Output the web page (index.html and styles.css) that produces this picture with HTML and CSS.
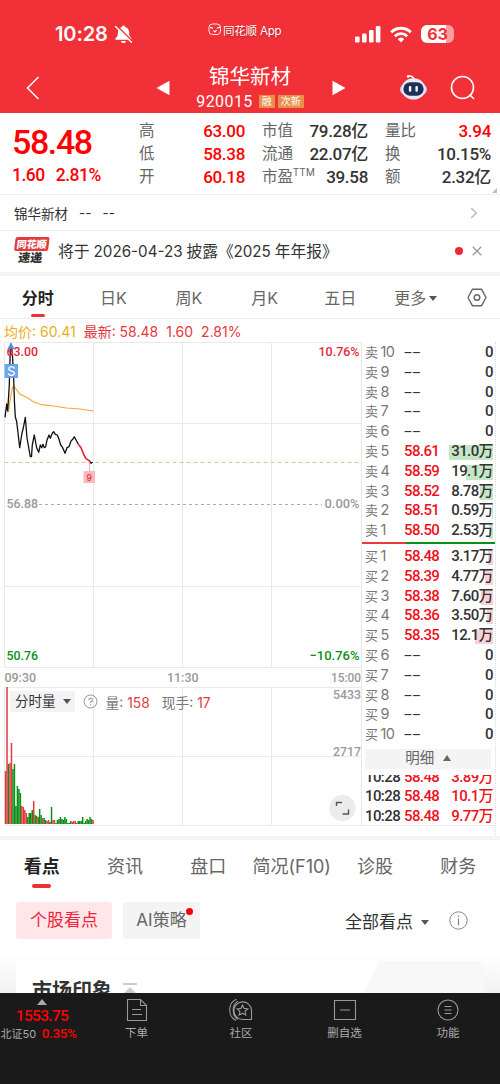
FILE: index.html
```html
<!DOCTYPE html>
<html lang="zh-CN">
<head>
    <meta charset="UTF-8">
    <meta name="viewport" content="width=device-width, initial-scale=1.0">
    <title>锦华新材 920015</title>
    <link rel="stylesheet" href="styles.css">
</head>
<body>
    <header class="top">
        <div class="status">
            <div class="clock">
                <span>10:28</span>
                <svg width="19" height="19" viewBox="0 0 19 19">
                    <path d="M9.500.6c-.9 0-1.500.7-1.500 1.500C5.200 2.900 3.900 5 3.900 7.500c0 3.300-.8 4.300-2.300 5.700-.6.6-.3 1.600.6 1.600h14.600c.9 0 1.200-1 .6-1.600-1.500-1.400-2.300-2.400-2.300-5.700 0-2.500-1.300-4.600-4.100-5.400 0-.8-.6-1.500-1.500-1.500zM7 15.900h5c-.2 1.300-1.200 2.200-2.500 2.200s-2.300-.9-2.500-2.200z" fill="#fff"/>
                    <path d="M2.800.8l15.800 15.500" stroke="#f23038" stroke-width="1.500"/>
                    <path d="M1.500 1.500l16 15.800" stroke="#fff" stroke-width="1.400" stroke-linecap="round"/>
                </svg>
            </div>
            <div class="brand">
                <svg width="14" height="13" viewBox="0 0 14 13" fill="none" stroke="#fff">
                    <rect x="1" y="1" width="11.500" height="10.500" rx="3.500" stroke-width=".9"/>
                    <path d="M2 4.500l3 .6M8.800 5.200l3.600-1.200M5.500 7.500l1.500 1.500 1.600-2" stroke-width="1.100"/>
                </svg>
                <span>同花顺 App</span>
            </div>
            <div class="signals">
                <svg width="26" height="17" viewBox="0 0 26 17" fill="#fff">
                    <rect x="0" y="10.500" width="4.600" height="6" rx="1.300"/>
                    <rect x="7" y="7.500" width="4.600" height="9" rx="1.300"/>
                    <rect x="14" y="4" width="4.600" height="12.500" rx="1.300"/>
                    <rect x="20.800" y="0" width="4.600" height="16.500" rx="1.300"/>
                </svg>
                <svg width="22" height="17" viewBox="0 0 22 17" fill="none" stroke="#fff" stroke-width="2.900">
                    <path d="M1.200 6.200a14 14 0 0 1 19.600 0"/>
                    <path d="M4.800 10.200a8.800 8.800 0 0 1 12.400 0"/>
                    <path d="M11 16.600l-3.300-3.500a4.800 4.800 0 0 1 6.600 0z" fill="#fff" stroke="none"/>
                </svg>
                <div class="battery">63</div>
            </div>
        </div>
        <div class="nav">
            <svg class="back" width="14" height="24" viewBox="0 0 14 24" fill="none" stroke="#fff" stroke-width="1.500"><path d="M12.500 1L1.500 12l11 11"/></svg>
            <svg class="prev" width="14" height="16" viewBox="0 0 14 16"><path d="M13.500.8v14.400L.5 8z" fill="#fff"/></svg>
            <div class="title">
                <div class="name">锦华新材</div>
                <div class="code"><span>920015</span><b>融</b><b>次新</b></div>
            </div>
            <svg class="next" width="14" height="16" viewBox="0 0 14 16"><path d="M.5.8v14.400L13.500 8z" fill="#fff"/></svg>
            <svg class="robot" width="29" height="27" viewBox="0 0 30 28">
                <path d="M10 2.200q4-1 5.500 3" fill="none" stroke="#fff" stroke-width="1.500"/>
                <circle cx="9.500" cy="2.500" r="1.400" fill="#fff"/>
                <ellipse cx="15" cy="16" rx="14" ry="8" fill="#c9c8ee"/>
                <ellipse cx="15" cy="15.500" rx="12.500" ry="11" fill="#e7e9fb"/>
                <rect x="4.500" y="8.500" width="21" height="14" rx="7" fill="#1d3158"/>
                <rect x="10.200" y="12.500" width="2.500" height="5.800" rx="1" fill="#fff"/>
                <rect x="17" y="12.500" width="2.500" height="5.800" rx="1" fill="#fff"/>
            </svg>
            <svg width="26" height="26" viewBox="0 0 26 26" fill="none" stroke="#fff" stroke-width="1.600"><circle cx="12.500" cy="12.500" r="11"/><path d="M20 20l3.500 3.500" stroke-linecap="round"/></svg>
        </div>
    </header>

    <section class="quote">
        <div class="last">
            <div class="price">58.48</div>
            <div class="change"><span>1.60</span><span>2.81%</span></div>
        </div>
        <dl class="red"><dt>高</dt><dd>63.00</dd><dt>低</dt><dd>58.38</dd><dt>开</dt><dd>60.18</dd></dl>
        <dl><dt>市值</dt><dd>79.28亿</dd><dt>流通</dt><dd>22.07亿</dd><dt>市盈<sup>TTM</sup></dt><dd>39.58</dd></dl>
        <dl><dt>量比</dt><dd class="up">3.94</dd><dt>换</dt><dd>10.15%</dd><dt>额</dt><dd>2.32亿</dd></dl>
        <i class="corner"></i>
    </section>

    <div class="sub">
        <span>锦华新材</span><span>--</span><span>--</span>
        <svg width="8" height="12" viewBox="0 0 8 12" fill="none" stroke="#bbb" stroke-width="1.500"><path d="M1.200 1l5 5-5 5"/></svg>
    </div>

    <div class="news">
        <div class="news-logo"><em>同花顺</em><strong>速递</strong></div>
        <p>将于 <span>2026-04-23</span> 披露《<span>2025</span> 年年报》</p>
        <i class="dot"></i>
        <svg width="10" height="10" viewBox="0 0 10 10" stroke="#999" stroke-width="1.300"><path d="M.7.7l8.600 8.600M9.300.7L.7 9.300"/></svg>
    </div>

    <nav class="periods">
        <span class="on">分时</span><span>日K</span><span>周K</span><span>月K</span><span>五日</span><span>更多<i class="caret"></i></span>
        <svg width="20" height="19" viewBox="0 0 20 19" fill="none" stroke="#666" stroke-width="1.400"><path d="M5.500 1.200h9L19 9.500l-4.500 8.300h-9L1 9.500z" stroke-linejoin="round"/><circle cx="10" cy="9.500" r="2.800"/></svg>
    </nav>

    <div class="legend"><span class="avg">均价: 60.41</span><span>最新: 58.48</span><span>1.60</span><span>2.81%</span></div>

    <main class="market">
        <div class="charts">
            <svg class="chart" width="362" height="484" viewBox="0 342 362 484">
                <g class="grid">
                    <path d="M4.500 342.500H362M4.500 423.500H362M4.500 586.500H362M4.500 667.500H362M4.500 687.500H362M4.500 756.500H362M4.500 825.500H362"/>
                    <path d="M4.500 342.500V667M93.500 342.500V667M182.500 342.500V667M271.500 342.500V667M361.500 342.500V825"/>
                    <path d="M4.500 687.500V825M93.500 687.500V825M182.500 687.500V825M271.500 687.500V825"/>
                </g>
                <path d="M4.500 462.500H362" stroke="#dcc2a0" stroke-dasharray="4 3"/>
                <path d="M39 504.500H322" stroke="#aaa" stroke-dasharray="3 3"/>
                <g id="volume"></g>
                <path d="M8.500 412L9.300 405 11 395 12.300 388 13.700 386 16 389 20 394.300 26.700 397.300 33.300 401.700 41.700 404.700 53.300 406 66.700 408 80 409 93.300 411" fill="none" stroke="#f5a733" stroke-width="1.200"/>
                <path d="M5 417.300L6.700 404 7.700 411 9.300 385 10.300 350 11 344 12.300 352 13.700 380 14.500 403 15.300 416.700 16.700 421.700 19.700 447.700 22 433 23.300 428 25.300 417.300 27 438 30.300 456.700H31.500L32.300 445 34.300 435 36.700 448 38.700 452.300 40.300 445 41.700 447.700 43 444.300 44.300 447.700 45.700 446.700 47 440 49 435 50.300 438.300 52.300 433.300 53.700 431.700 55.300 434.300 57.300 435 58.700 438.300 60.700 445 62.700 447.700 65 453.300 67 447.700 69 446.700 71 441 73 439 74.300 436.700 77 441.700 78.300 444.300" class="line"/>
                <path d="M78.300 444.300L81 447.700 83.300 453.300 85.700 458.300 88.700 460.300 90.300 461.700" class="line hot"/>
                <path d="M90.300 461.700L91 463.300 92.700 462.300" class="line"/>
                <path d="M89.500 463V471" stroke="#f7aeb4"/>
                <rect x="83.500" y="471" width="11.500" height="12" fill="#f9b9be"/>
                <text x="89.300" y="480.500" class="nine">9</text>
                <g class="num">
                    <text x="6.500" y="356" class="r" textLength="31.500" lengthAdjust="spacingAndGlyphs">63.00</text>
                    <text x="318.500" y="356" class="r" textLength="41" lengthAdjust="spacingAndGlyphs">10.76%</text>
                    <text x="6.500" y="508" textLength="31.500" lengthAdjust="spacingAndGlyphs">56.88</text>
                    <text x="324.500" y="508" textLength="35" lengthAdjust="spacingAndGlyphs">0.00%</text>
                    <text x="6.500" y="659.500" class="g" textLength="31.500" lengthAdjust="spacingAndGlyphs">50.76</text>
                    <text x="309.500" y="659.500" class="g" textLength="50" lengthAdjust="spacingAndGlyphs">−10.76%</text>
                    <text x="4.500" y="681.500" textLength="31.500" lengthAdjust="spacingAndGlyphs">09:30</text>
                    <text x="167" y="681.500" textLength="31.500" lengthAdjust="spacingAndGlyphs">11:30</text>
                    <text x="331" y="681.500" textLength="30" lengthAdjust="spacingAndGlyphs">15:00</text>
                    <text x="333" y="698.500" textLength="28" lengthAdjust="spacingAndGlyphs">5433</text>
                    <text x="333" y="755.500" textLength="28" lengthAdjust="spacingAndGlyphs">2717</text>
                </g>
                <path d="M7.500 349l3.500-6.500 3.500 6.500z" fill="#4a90e2"/>
                <rect x="4.500" y="364" width="13.500" height="14" fill="#5b9cec" opacity=".9"/>
                <text x="11.300" y="375.500" class="sell">S</text>
                <circle cx="342.500" cy="808" r="13.200" fill="#ececec"/>
                <path d="M336.500 806V802.500H342M348.500 809.500V814H342.500" fill="none" stroke="#555" stroke-width="1.400"/>
            </svg>
            <div class="vol-head">
                <span class="picker">分时量<i class="caret"></i></span>
                <svg width="15" height="15" viewBox="0 0 15 15" fill="none" stroke="#999"><circle cx="7.500" cy="7.500" r="6.500"/><path d="M5.600 6a1.900 1.900 0 1 1 2.700 1.800c-.6.300-.8.600-.8 1.200M7.500 10.200v1.200" stroke-width="1.100"/></svg>
                <span>量: <b>158</b></span><span>现手: <b>17</b></span>
            </div>
        </div>
        <aside class="book">
            <div id="asks"></div>
            <div class="ratio"></div>
            <div id="bids"></div>
            <div class="detail">明细 <i></i></div>
            <div class="ticks">
                <div><span>10:28</span><b>58.48</b><b class="v">3.89万</b></div>
                <div><span>10:28</span><b>58.48</b><b class="v">10.1万</b></div>
                <div><span>10:28</span><b>58.48</b><b class="v">9.77万</b></div>
            </div>
        </aside>
    </main>

    <nav class="tabs">
        <span class="on">看点</span><span>资讯</span><span>盘口</span><span>简况(F10)</span><span>诊股</span><span>财务</span>
    </nav>

    <div class="filters">
        <span class="chip active">个股看点</span>
        <span class="chip">AI策略<i class="dot"></i></span>
        <span class="all">全部看点<i class="caret"></i></span>
        <svg width="19" height="19" viewBox="0 0 19 19" fill="none" stroke="#888"><circle cx="9.500" cy="9.500" r="8.700"/><path d="M9.500 4.500v1.500M9.500 7.500v7" stroke-width="1.200"/></svg>
    </div>

    <section class="feed">
        <div class="card">
            <h2>市场印象</h2>
            <svg width="16" height="16" viewBox="0 0 16 16" fill="#ccc"><path d="M1 1h14v2H1zM8 5l6 6H2z"/></svg>
        </div>
    </section>

    <footer class="dock">
        <div class="index">
            <i class="tri"></i>
            <b>1553.75</b>
            <p>北证<span>50</span> <b>0.35%</b></p>
        </div>
        <div class="item">
            <svg width="24" height="24" viewBox="0 0 24 24"><path d="M2.500 1.500h13l6 6v15h-19zM15.500 1.500v6h6M7 11.500h9M7 16.500h10"/></svg>
            <span>下单</span>
        </div>
        <div class="item">
            <svg width="24" height="24" viewBox="0 0 24 24"><path d="M7.500 1.300C-1.500 5-1.500 18.500 7 22.500M9 3.200C2.500 7 2.500 17.500 9 21.500M14 21.500h8.500V12a8.800 8.800 0 1 0-8.500 9.500z"/><path d="M13.500 7l1.600 3.400 3.700.4-2.700 2.500.7 3.700-3.300-1.800-3.300 1.800.7-3.700-2.700-2.500 3.700-.4z"/></svg>
            <span>社区</span>
        </div>
        <div class="item">
            <svg width="24" height="24" viewBox="0 0 24 24"><path d="M1.500 2.500h21v19h-21zM7 12h10"/></svg>
            <span>删自选</span>
        </div>
        <div class="item">
            <svg width="24" height="24" viewBox="0 0 24 24"><circle cx="12" cy="12" r="10"/><path d="M8.500 8.500h7M8.500 12h7M8.500 15.500h7"/></svg>
            <span>功能</span>
        </div>
    </footer>

    <script>
        // 五档以外没有挂单: [名称, 档位, 价格, 数量, 底色宽度]
        const asks = [
            ['卖', 10], ['卖', 9], ['卖', 8], ['卖', 7], ['卖', 6],
            ['卖', 5, '58.61', '31.0万', 44],
            ['卖', 4, '58.59', '19.1万', 27],
            ['卖', 3, '58.52', '8.78万', 13],
            ['卖', 2, '58.51', '0.59万', 1],
            ['卖', 1, '58.50', '2.53万', 4]
        ];
        const bids = [
            ['买', 1, '58.48', '3.17万', 5],
            ['买', 2, '58.39', '4.77万', 8],
            ['买', 3, '58.38', '7.60万', 12],
            ['买', 4, '58.36', '3.50万', 6],
            ['买', 5, '58.35', '12.1万', 18],
            ['买', 6], ['买', 7], ['买', 8], ['买', 9], ['买', 10]
        ];

        function renderBook(id, rows) {
            document.getElementById(id).innerHTML = rows.map(([side, n, price, vol, w]) => `
                <div class="level">
                    <span class="side">${side}<em>${n}</em></span>
                    <span class="${price ? 'p' : 'none'}">${price || '--'}</span>
                    <span class="v">${w ? `<i style="width:${w}px"></i>` : ''}<u>${vol || '0'}</u></span>
                </div>`).join('');
        }
        renderBook('asks', asks);
        renderBook('bids', bids);

        // 每分钟成交量, r 涨 g 跌
        const volume = '53r 137r 60g 61r 81r 55g 60g 18g 38g 35g 31g 18r 17r 14r 11r 7g 11g 11g 14g 23r 9g 8r 7g 15g 9g 6r 6g 4g 3r 4r 2g 17g 4r 4r 1g 4g 5g 7g 5g 4g 7g 5g 1g 1g 3g 2r 3r 3r 1g 3g 3g 3g 7g 1g 3g 5g 4g 7g 5g 4r';
        document.getElementById('volume').innerHTML = volume.split(' ').map((v, i) => {
            const h = parseInt(v);
            const color = v.endsWith('r') ? '#e8383d' : '#0b8f17';
            return `<rect x="${(4.8 + i * 1.483).toFixed(2)}" y="${824 - h}" width="1.5" height="${h}" fill="${color}"/>`;
        }).join('');
    </script>
</body>
</html>
```
FILE: styles.css
```css
* {
    box-sizing: border-box;
}

body {
    margin: 0;
    width: 500px;
    height: 1084px;
    overflow: hidden;
    background: #fff;
    color: #333;
    font-family: Inter, "Noto Sans CJK SC", sans-serif;
    font-size: 15px;
}

svg {
    display: block;
    flex: none;
}

i, em {
    font-style: normal;
}

/* 顶部 */
.top {
    height: 113px;
    background: #f23038;
    color: #fff;
}

.status {
    height: 62px;
    display: grid;
    grid-template-columns: 208px 1fr 145px;
    padding-top: 19px;
}

.clock {
    display: flex;
    align-items: center;
    gap: 6px;
    height: 30px;
    padding-left: 55px;
    font-size: 20px;
    font-weight: 600;
    letter-spacing: -.1px;
}

.brand {
    display: flex;
    align-items: center;
    gap: 1px;
    height: 21px;
    font-size: 11.5px;
    letter-spacing: -.2px;
    text-shadow: 0 1px 2px rgba(0, 0, 0, .35);
}

.signals {
    display: flex;
    align-items: center;
    gap: 9px;
    height: 30px;
}

.battery {
    width: 33px;
    height: 18px;
    border-radius: 6px;
    background: linear-gradient(90deg, #fff 25px, #fb9da2 25px);
    color: #f23038;
    font-size: 16px;
    font-weight: 700;
    line-height: 18px;
    text-align: center;
}

.nav {
    height: 51px;
    display: flex;
    align-items: center;
    padding-left: 26px;
}

.prev {
    margin-left: 116px;
}

.title {
    width: 162px;
    padding-right: 2px;
    text-align: center;
}

.name {
    font-size: 20.5px;
    line-height: 27px;
}

.code {
    display: flex;
    justify-content: center;
    align-items: center;
    gap: 3px;
    font-size: 16px;
    line-height: 23px;
}

.code span {
    margin-right: 3px;
    font-family: Roboto, sans-serif;
    letter-spacing: .4px;
}

.code b {
    padding: 0 3px;
    height: 13px;
    background: #e8914a;
    font-size: 10px;
    font-weight: 400;
    line-height: 13px;
}

.robot {
    margin: 0 22px 0 53px;
}

/* 行情 */
.quote {
    position: relative;
    height: 82px;
    display: grid;
    grid-template-columns: 111px 106px 106px 106px;
    column-gap: 17px;
    padding-left: 11px;
    border-bottom: 1px solid #eee;
    font-family: Roboto, "Noto Sans CJK SC", sans-serif;
    font-weight: 500;
}

.quote dl {
    display: grid;
    grid-template-columns: auto 1fr;
    grid-auto-rows: 23px;
    margin: 7px 0 0;
    line-height: 23px;
    width: 106px;
}

.quote dt {
    color: #666;
    font-size: 15.5px;
    font-weight: 400;
    white-space: nowrap;
}

.quote dd {
    margin: 0;
    text-align: right;
    font-size: 17px;
    letter-spacing: -.3px;
    white-space: nowrap;
}

.quote dl.red dd, .quote dd.up, .last {
    color: #f00;
}

/* 不让 TTM 把数值列挤出去 */
.quote sup {
    margin-right: -20px;
    font-size: 10px;
    line-height: 1;
    letter-spacing: .5px;
}

.price {
    margin: 9px 0 0 1px;
    font-size: 34px;
    line-height: 40px;
    letter-spacing: -1.4px;
}

.change {
    display: flex;
    gap: 11px;
    padding-left: 1px;
    font-size: 17.5px;
    line-height: 27px;
    letter-spacing: -.5px;
}

.corner {
    position: absolute;
    right: 3px;
    bottom: 1px;
    border-left: 5px solid transparent;
    border-bottom: 5px solid #bbb;
}

.sub {
    height: 36px;
    display: flex;
    align-items: center;
    gap: 11px;
    padding: 0 22px 0 14px;
    border-bottom: 1px solid #eee;
    font-size: 13.5px;
}

.sub svg {
    margin-left: auto;
}

.news {
    height: 45px;
    display: flex;
    align-items: center;
    padding: 0 18px 2px 14px;
    border-bottom: 4px solid #f4f4f4;
}

.news p {
    margin: 0 auto 0 10px;
    font-size: 15.8px;
    white-space: nowrap;
}

.news p span {
    font-size: 15.2px;
    margin: 0 -.5px;
}

.news-logo {
    width: 34px;
    display: flex;
    flex-direction: column;
    transform: skewX(-7deg);
    text-align: center;
    line-height: 14px;
}

.news-logo em {
    background: #e33b40;
    color: #fff;
    font-size: 10px;
    font-weight: 900;
    border-radius: 2px;
}

.news-logo strong {
    font-size: 12px;
    font-weight: 900;
}

.dot {
    width: 8px;
    height: 8px;
    border-radius: 50%;
    background: #ee2a30;
}

.news .dot {
    margin-right: 9px;
}

/* 周期切换 */
.periods {
    height: 43px;
    display: grid;
    grid-template-columns: repeat(6, 75.6px) 1fr;
    align-items: center;
    border-bottom: 1px solid #eee;
    color: #666;
    font-size: 16px;
    text-align: center;
}

.periods svg {
    margin-left: 13px;
}

.periods span, .tabs span {
    position: relative;
    white-space: nowrap;
}

.on {
    color: #222;
    font-weight: 700;
}

.on::after {
    content: "";
    position: absolute;
    left: 50%;
    bottom: -8px;
    width: 14px;
    height: 3px;
    margin-left: -7px;
    border-radius: 2px;
    background: #ee3136;
}

.caret {
    display: inline-block;
    margin-left: 4px;
    border: 4px solid transparent;
    border-top: 5px solid #555;
    border-bottom: 0;
    vertical-align: 3px;
}

.periods .caret {
    margin-left: 3px;
}

.legend {
    height: 23px;
    display: flex;
    gap: 8px;
    padding-left: 4px;
    color: #e4393c;
    font-size: 14px;
    line-height: 25px;
}

.legend .avg {
    color: #eaae1c;
}

/* 图表 */
.market {
    height: 498px;
    display: flex;
    border-bottom: 4px solid #f4f4f4;
}

.charts {
    position: relative;
    width: 362px;
}

.grid {
    fill: none;
    stroke: #e9e9e9;
}

.line {
    fill: none;
    stroke: #111;
    stroke-width: 1.3;
    stroke-linejoin: round;
}

.hot {
    stroke: #dc2236;
    stroke-width: 1.6;
}

.num {
    font-family: Roboto, sans-serif;
    font-size: 13.5px;
    font-weight: 500;
    fill: #999;
}

.num .r {
    fill: #e4283c;
}

.num .g {
    fill: #0b8f17;
}

.nine, .sell {
    font-size: 8.5px;
    font-weight: 500;
    fill: #e4283c;
    text-anchor: middle;
}

.sell {
    font-size: 12.5px;
    fill: #fff;
}

.vol-head {
    position: absolute;
    left: 10px;
    top: 349px;
    height: 21px;
    display: flex;
    align-items: center;
    gap: 8px;
    color: #777;
    font-size: 13.8px;
    white-space: nowrap;
}

.vol-head span + span {
    margin-left: 4px;
}

.vol-head b {
    color: #e4393c;
    font-weight: 400;
}

.picker {
    padding: 0 4px 0 5px;
    background: #f3f3f3;
    color: #333;
    font-size: 13.5px;
    line-height: 21px;
}

.picker .caret {
    margin-left: 7px;
    vertical-align: 2px;
}

.book {
    width: 134px;
    padding-top: 1px;
    border-right: 1px dotted #ddd;
    font-family: Roboto, "Noto Sans CJK SC", sans-serif;
    font-size: 15px;
}

.level {
    height: 19.8px;
    display: grid;
    grid-template-columns: 39px 40px 49px;
    padding-left: 3px;
    line-height: 19.8px;
    letter-spacing: -.6px;
    font-weight: 500;
}

.side {
    color: #777;
    font-size: 13px;
    font-weight: 400;
    line-height: 18.8px;
}

.side em {
    margin-left: 3px;
    font-family: Inter, sans-serif;
    font-size: 14.5px;
}

.p {
    color: #f0101c;
}

.none {
    letter-spacing: .3px;
    transform: scaleX(1.9);
    transform-origin: left;
    font-weight: 400;
}

.level .v {
    position: relative;
    text-align: right;
}

.v u {
    position: relative;
    text-decoration: none;
}

/* 挂单量底色 */
.v i {
    position: absolute;
    right: 0;
    top: 3px;
    height: 15px;
    background: #c6e6c8;
}

#bids .v i {
    background: #fbd3d7;
}

.ratio {
    height: 2px;
    margin: 1px 0 3px;
    background: linear-gradient(90deg, #e33b40 33%, #0b8f17 33%);
}

.detail {
    height: 20px;
    margin: 4px 4px 6px 3px;
    background: #f4f4f4;
    color: #666;
    font-size: 14.5px;
    line-height: 20px;
    text-align: center;
}

.detail i {
    display: inline-block;
    margin-left: 5px;
    border: 4px solid transparent;
    border-bottom: 6px solid #666;
    border-top: 0;
    vertical-align: 2px;
}

.ticks {
    height: 51px;
    display: flex;
    flex-direction: column;
    justify-content: flex-end;
    overflow: hidden;
    border-bottom: 1px solid #e9e9e9;
}

.ticks div {
    flex: none;
    position: relative;
    top: 2px;
    display: grid;
    grid-template-columns: 39px 40px 49px;
    padding-left: 3px;
    line-height: 19.8px;
    letter-spacing: -.6px;
    font-weight: 500;
}

.ticks b {
    color: #f0101c;
    font-weight: 500;
}

.ticks .v {
    text-align: right;
}

/* 资讯 */
.tabs {
    height: 62px;
    display: grid;
    grid-template-columns: repeat(6, 1fr);
    padding-top: 13px;
    color: #666;
    font-size: 18px;
    line-height: 28px;
    text-align: center;
}

.tabs .on::after {
    bottom: 14px;
    width: 19px;
    height: 4px;
    margin-left: -10px;
}

.filters {
    height: 37px;
    display: flex;
    align-items: center;
    padding: 0 32px 0 16px;
    font-size: 17px;
}

.chip {
    position: relative;
    width: 77px;
    margin-right: 11px;
    border-radius: 3px;
    background: #f4f4f4;
    color: #666;
    line-height: 37px;
    text-align: center;
    white-space: nowrap;
}

.chip.active {
    width: 96px;
    background: #ffe6e9;
    color: #f0243c;
}

.chip .dot {
    position: absolute;
    right: 7px;
    top: 6px;
    width: 7px;
    height: 7px;
    background: #f00;
}

.all {
    margin-left: auto;
    margin-right: 20px;
    color: #333;
}

.all .caret {
    margin-left: 8px;
}

.feed {
    height: 54px;
    padding: 22px 16px 0;
    background: linear-gradient(#fff 30%, #f2f2f2);
    overflow: hidden;
}

.card {
    height: 60px;
    display: flex;
    gap: 10px;
    padding: 17px 16px 0;
    border-radius: 6px;
    background: linear-gradient(115deg, #fff 73%, #f8f8f8 73.2%, #f8f8f8);
}

.card h2 {
    margin: 0;
    font-size: 20px;
    line-height: 26px;
}

.card svg {
    margin-top: 4px;
}

/* 底栏 */
.dock {
    position: relative;
    height: 91px;
    display: grid;
    grid-template-columns: 84px 105px 104px 103px 104px;
    background: #1a1a1a;
    color: #aaa;
    font-size: 11.5px;
}

.index {
    text-align: center;
    font-family: Roboto, "Noto Sans CJK SC", sans-serif;
    white-space: nowrap;
}

.index b {
    display: block;
    color: #f00;
    font-size: 15.5px;
    font-weight: 500;
    line-height: 20px;
    letter-spacing: -.7px;
}

.tri {
    display: block;
    width: 10px;
    margin: 6px auto 1px;
    border: 5px solid transparent;
    border-bottom: 6px solid #aaa;
    border-top: 0;
}

.index p {
    margin: 0 0 0 -7px;
    font-size: 11px;
    line-height: 15px;
}

.index p span {
    font-family: Inter, sans-serif;
}

.index p b {
    display: inline;
    margin-left: 3px;
    font-size: 13.5px;
    line-height: 15px;
    letter-spacing: -.4px;
}

.item {
    display: flex;
    flex-direction: column;
    align-items: center;
    gap: 2px;
    padding-top: 5px;
}

.item svg {
    fill: none;
    stroke: #999;
    stroke-width: 1.1;
}
```
